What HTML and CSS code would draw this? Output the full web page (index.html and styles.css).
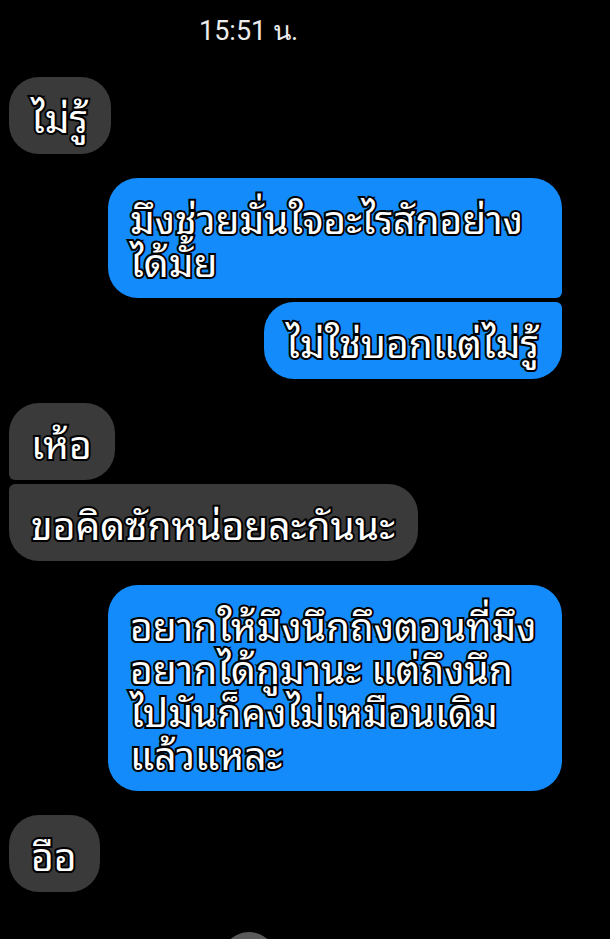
FILE: index.html
```html
<!DOCTYPE html>
<html lang="th">
<head>
    <meta charset="UTF-8">
    <title>แชท</title>
    <link rel="stylesheet" href="styles.css">
</head>
<body>
    <div class="time">15:51 น.</div>

    <div class="chat">
        <div class="group in">
            <div class="msg">ไม่รู้</div>
        </div>

        <div class="group out">
            <div class="msg">มึงช่วยมั่นใจอะไรสักอย่าง<br>ได้มั้ย</div>
            <div class="msg">ไม่ใช่บอกแต่ไม่รู้</div>
        </div>

        <div class="group in">
            <div class="msg">เห้อ</div>
            <div class="msg">ขอคิดซักหน่อยละกันนะ</div>
        </div>

        <div class="group out">
            <div class="msg">อยากให้มึงนึกถึงตอนที่มึง<br>อยากได้กูมานะ แต่ถึงนึก<br>ไปมันก็คงไม่เหมือนเดิม<br>แล้วแหละ</div>
        </div>

        <div class="group in">
            <div class="msg">อือ</div>
        </div>

        <div class="avatar"></div>
    </div>
</body>
</html>
```

FILE: styles.css
```css
html, body { margin: 0; height: 939px; overflow: hidden; }
body { background: #000; font-family: "Noto Sans Thai Looped", "Noto Serif Thai", "Loma", "Garuda", "Noto Sans", sans-serif; color: #fff; }

.time { padding: 9px 0 0 199px; height: 77px; box-sizing: border-box; font-family: Roboto, "Noto Sans", sans-serif; font-size: 27px; color: #ececec; }

.chat { display: flex; flex-direction: column; gap: 24px; padding: 0 48px 0 9px; }
.group { display: flex; flex-direction: column; gap: 4px; }
.group.in { align-items: flex-start; }
.group.out { align-items: flex-end; }

.msg {
    font-size: 39px;
    line-height: 43px;
    padding: 17px 23px 17px 22px;
    border-radius: 30px;
    max-width: 410px;
    white-space: nowrap;
    -webkit-text-stroke: 4px #000;
    paint-order: stroke fill;
}
.in .msg { background: #3a3a3a; }
.out .msg { background: #148bfa; }
.out .msg:first-child { width: 409px; }

.in .msg:not(:last-child) { border-bottom-left-radius: 6px; }
.in .msg:not(:first-child) { border-top-left-radius: 6px; }
.out .msg:not(:last-child) { border-bottom-right-radius: 6px; }
.out .msg:not(:first-child) { border-top-right-radius: 6px; }

.avatar { width: 56px; height: 56px; border-radius: 50%; background: #5a5a5a; margin: 16px 0 0 212px; }
```
